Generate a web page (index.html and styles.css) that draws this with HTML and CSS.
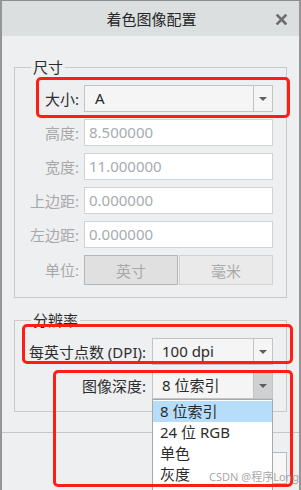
FILE: index.html
```html
<!DOCTYPE html>
<html lang="zh-CN">
<head>
<meta charset="utf-8">
<link rel="stylesheet" href="styles.css">
</head>
<body>
<div class="window">
  <div class="titlebar">
    <span class="title">着色图像配置</span>
    <svg class="close" width="11" height="11" viewBox="0 0 11 11"><path d="M1.5 1.5 L9.5 9.5 M9.5 1.5 L1.5 9.5" stroke="#6e6e6e" stroke-width="2.6" stroke-linecap="square"/></svg>
  </div>
  <div class="content">
    <fieldset class="group">
      <legend>尺寸</legend>
      <div class="grid grid-size">
        <span class="lbl">大小:</span>
        <div class="select"><span class="val">A</span><span class="drop"><i class="tri"></i></span></div>
        <span class="lbl dis">高度:</span>
        <div class="input">8.500000</div>
        <span class="lbl dis">宽度:</span>
        <div class="input">11.000000</div>
        <span class="lbl dis">上边距:</span>
        <div class="input">0.000000</div>
        <span class="lbl dis">左边距:</span>
        <div class="input">0.000000</div>
        <span class="lbl dis">单位:</span>
        <div class="seg"><span class="segbtn on">英寸</span><span class="segbtn">毫米</span></div>
      </div>
    </fieldset>
    <fieldset class="group res">
      <legend>分辨率</legend>
      <div class="grid grid-res">
        <span class="lbl">每英寸点数 (DPI):</span>
        <div class="select"><span class="val">100 dpi</span><span class="drop"><i class="tri"></i></span></div>
        <span class="lbl">图像深度:</span>
        <div class="select"><span class="val">8 位索引</span><span class="drop hot"><i class="tri"></i></span></div>
      </div>
    </fieldset>
    <div class="sep"></div>
    <div class="footer"><span class="btn">确定</span></div>
  </div>

  <ul class="list">
    <li class="sel">8 位索引</li>
    <li>24 位 RGB</li>
    <li>单色</li>
    <li>灰度</li>
  </ul>

  <div class="mark mark1"></div>
  <div class="mark mark2"></div>
  <div class="mark mark3"></div>
  <div class="watermark">CSDN @程序Long</div>
</div>
</body>
</html>
```

FILE: styles.css
```css
* { box-sizing: border-box; }
html, body { margin: 0; padding: 0; background: #eeeff1; }
body {
  font-family: "Noto Sans", "Noto Sans CJK SC", sans-serif;
  font-size: 15px;
  color: #303030;
}
.window {
  position: relative;
  width: 301px;
  height: 490px;
  overflow: hidden;
  background: #eeeff1;
  border-top: 1px solid #8e8e8e;
  border-left: 2px solid #959595;
  border-right: 2px solid #959595;
}
.titlebar {
  height: 35px;
  background: #dcdfe0;
  display: flex;
  align-items: center;
  justify-content: center;
  position: relative;
}
.title {
  font-family: "Noto Sans CJK SC", sans-serif;
  font-size: 15px;
  color: #262626;
  margin-left: 2px;
}
.close {
  position: absolute;
  right: 12px;
  top: 13px;
}
.content {
  padding: 21px 12px 0 12px;
}
.group {
  margin: 0;
  padding: 8px 12px 12px 0;
  border: 1px solid #c8c9cb;
  min-width: 0;
}
.group legend {
  margin-left: 16px;
  padding: 0 2px;
  line-height: 20px;
  font-family: "Noto Sans CJK SC", sans-serif;
  color: #2b2b2b;
}
.res { margin-top: 12px; }
.grid {
  display: grid;
  align-items: center;
}
.grid-size {
  grid-template-columns: 64px 189px;
  grid-template-rows: repeat(5, 27px) 30px;
  column-gap: 5px;
  row-gap: 7px;
}
.grid-res {
  grid-template-columns: 131px 121px;
  grid-auto-rows: 27px;
  column-gap: 6px;
  row-gap: 7px;
}
.lbl {
  text-align: right;
  white-space: nowrap;
  font-family: "Noto Sans", "Noto Sans CJK SC", sans-serif;
  color: #2e2e2e;
  line-height: 20px;
}
.lbl.dis { color: #a8a8a8; }
.select {
  height: 27px;
  display: flex;
  border: 1px solid #c3c3c3;
  background: #f5f5f5;
}
.select .val {
  flex: 1;
  padding-left: 9px;
  line-height: 25px;
  color: #2a2a2a;
}
.grid-size .select .val { padding-left: 10px; }
.drop {
  width: 19px;
  border-left: 1px solid #c3c3c3;
  display: flex;
  align-items: center;
  justify-content: center;
}
.drop.hot { background: #cfd0d1; }
.tri {
  width: 0; height: 0;
  border-left: 4px solid transparent;
  border-right: 4px solid transparent;
  border-top: 4px solid #5e5e5e;
}
.input {
  height: 27px;
  border: 1px solid #d2d2d2;
  background: #ffffff;
  color: #a6abb1;
  padding-left: 4px;
  line-height: 25px;
}
.seg {
  height: 30px;
  display: flex;
  gap: 1px;
}
.segbtn {
  flex: 1;
  display: flex;
  align-items: center;
  justify-content: center;
  border: 1px solid #d2d2d2;
  background: #eaeaeb;
  color: #a9a9a9;
  font-family: "Noto Sans CJK SC", sans-serif;
}
.segbtn.on {
  background: #e0e0e1;
  border-color: #b5b5b5;
}
.sep {
  margin: 20px -12px 0 -12px;
  height: 1px;
  background: #c5c6c8;
}
.footer {
  display: flex;
  justify-content: flex-end;
  padding-top: 19px;
}
.btn {
  width: 86px;
  height: 32px;
  border: 1px solid #b9b9b9;
  background: #f7f7f7;
  display: flex;
  align-items: flex-start;
  justify-content: center;
  line-height: 14px;
  color: #1d4f8c;
}
.list {
  position: absolute;
  left: 150px;
  top: 398px;
  width: 121px;
  margin: 0;
  padding: 1px 0 0 0;
  list-style: none;
  background: #ffffff;
  border: 1px solid #a9a9a9;
  height: 100px;
}
.list li {
  height: 21px;
  line-height: 21px;
  padding-left: 7px;
  color: #2c2c2c;
  white-space: nowrap;
}
.list li.sel { background: #b6defa; }
.mark {
  position: absolute;
  border: 3px solid #ff1e14;
  border-radius: 5px;
}
.mark1 { left: 34px; top: 76px; width: 254px; height: 41px; }
.mark2 { left: 20px; top: 323px; width: 271px; height: 40px; }
.mark3 { left: 51px; top: 369px; width: 240px; height: 117px; }
.watermark {
  position: absolute;
  left: 207px;
  top: 470px;
  font-size: 11px;
  line-height: 12px;
  color: rgba(150,150,150,0.85);
  white-space: nowrap;
  font-family: "Noto Sans", "Noto Sans CJK SC", sans-serif;
}
```
